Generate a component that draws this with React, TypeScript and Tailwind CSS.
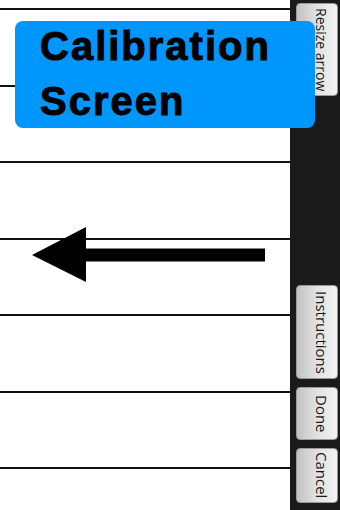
export default function App() {
  const lines = [0, 1, 2, 3, 4, 5, 6];
  return (
    <div className="relative flex h-[510px] w-[340px] overflow-hidden bg-white">
      <main className="flex w-[290px] flex-col gap-[74.5px] pt-[8px]">
        {lines.map((i) => (
          <div key={i} className="h-[2px] bg-[#111]" />
        ))}
      </main>

      <aside className="flex w-[50px] flex-col gap-[8px] bg-[#1a1a1a] pb-[7px] pl-[6px] pr-[2px] pt-[3px]">
        <SideButton label="Resize arrow" h="h-[93px]" size="text-[14px]" />
        <div className="flex-1" />
        <SideButton label="Instructions" h="h-[94px]" size="text-[15px]" />
        <SideButton label="Done" h="h-[53px]" size="text-[15px]" />
        <SideButton label="Cancel" h="h-[55px]" size="text-[15px]" />
      </aside>

      <div className="absolute left-[15px] top-[21px] h-[107px] w-[300px] rounded-lg bg-[#0096fb] pl-[25px] font-['Liberation_Sans',Arial,sans-serif] text-[40px] font-bold leading-[55px] tracking-[2px] text-black [-webkit-text-stroke:1px_black]">
        <div className="-mt-[2px]">
          Calibration
          <br />
          Screen
        </div>
      </div>

      <svg
        className="absolute left-[30px] top-[226px]"
        width="238"
        height="58"
        viewBox="0 0 238 58"
      >
        <polygon points="2,29 56,1 56,22.5 235,22.5 235,35.5 56,35.5 56,56" fill="#000" />
      </svg>
    </div>
  );
}

function SideButton({ label, h, size }: { label: string; h: string; size: string }) {
  return (
    <button
      className={`${h} ${size} flex w-[42px] items-center justify-center whitespace-nowrap rounded-[4px] border border-[#9a9a9a] bg-gradient-to-l from-[#f2f2f2] via-[#e2e2e2] to-[#c2c2c2] pl-[8px] font-['Open_Sans',sans-serif] leading-none text-[#1a1a1a] [writing-mode:vertical-rl]`}
    >
      {label}
    </button>
  );
}
